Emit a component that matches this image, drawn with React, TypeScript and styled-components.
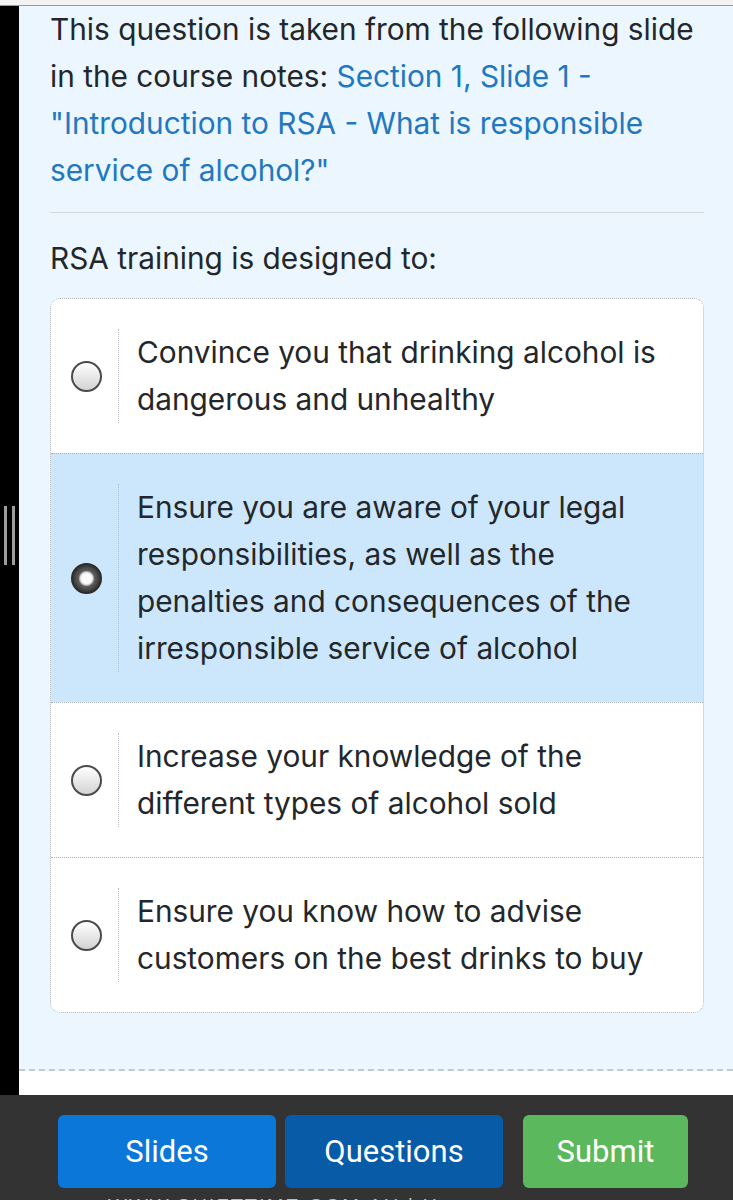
import React from "react";
import styled, { createGlobalStyle } from "styled-components";

const GlobalStyle = createGlobalStyle`
  html, body {
    margin: 0;
    padding: 0;
    background: #ffffff;
  }
  body {
    font-family: "Inter", "Noto Sans", "Liberation Sans", sans-serif;
    -webkit-font-smoothing: antialiased;
  }
`;

const options = [
  "Convince you that drinking alcohol is dangerous and unhealthy",
  "Ensure you are aware of your legal responsibilities, as well as the penalties and consequences of the irresponsible service of alcohol",
  "Increase your knowledge of the different types of alcohol sold",
  "Ensure you know how to advise customers on the best drinks to buy",
];

const Page = styled.div`
  width: 733px;
  height: 1200px;
  overflow: hidden;
  display: flex;
  flex-direction: column;
`;

const TopStrip = styled.div`
  height: 5px;
  background: #f3f3f3;
  border-bottom: 1px solid #9a9a9a;
  flex-shrink: 0;
`;

const Body = styled.div`
  display: flex;
  flex-shrink: 0;
`;

const Rail = styled.div`
  width: 19px;
  background: #000;
  display: flex;
  justify-content: center;
  align-items: flex-start;
  gap: 5px;
  padding-top: 500px;
  box-sizing: border-box;
`;

const Grip = styled.div`
  width: 3px;
  height: 59px;
  background: #9d9d9d;
`;

const Main = styled.div`
  flex: 1;
  display: flex;
  flex-direction: column;
`;

const Panel = styled.div`
  background: #ecf6fe;
  padding: 0 29px 56px 31px;
  border-bottom: 2px dashed #c4c9ce;
`;

const Paragraph = styled.p`
  margin: 0;
  font-size: 29.8px;
  line-height: 47px;
  color: #23272b;
`;

const Link = styled.a`
  color: #2278c0;
  text-decoration: none;
`;

const Rule = styled.hr`
  border: none;
  border-top: 1px solid #d3d8dd;
  margin: 18px 0 22px;
`;

const Prompt = styled(Paragraph)`
  margin-bottom: 16px;
`;

const Card = styled.div`
  background: #fff;
  border: 1px dotted #a9b0b6;
  border-radius: 10px;
  overflow: hidden;
`;

const Option = styled.label<{ $selected?: boolean }>`
  display: flex;
  align-items: center;
  padding: 30px 20px 30px 0;
  background: ${(p) => (p.$selected ? "#cce7fc" : "#fff")};
  & + & {
    border-top: 1px dotted #a9b0b6;
  }
`;

const RadioCell = styled.div`
  width: 67px;
  display: flex;
  justify-content: center;
  align-self: stretch;
  align-items: center;
  border-right: 1px dotted #b8bec3;
  margin-right: 18px;
  flex-shrink: 0;
`;

const Radio = styled.span<{ $checked?: boolean }>`
  width: 31px;
  height: 31px;
  border-radius: 50%;
  box-sizing: border-box;
  border: 2px solid ${(p) => (p.$checked ? "#2c2c2c" : "#4a4a4a")};
  background: ${(p) =>
    p.$checked
      ? "radial-gradient(circle, #fafafa 0 5px, #cfcfcf 6.5px, #5e5e5e 8px, #3a3a3a 13px)"
      : "linear-gradient(#ffffff, #d3d3d3)"};
  margin-left: 3px;
`;

const OptionText = styled.span`
  font-size: 29.8px;
  line-height: 47px;
  color: #23272b;
`;

const Gap = styled.div`
  height: 24px;
  background: #fff;
`;

const Footer = styled.div`
  flex: 1;
  background: #333333;
  padding: 20px 0 0 58px;
  display: flex;
  flex-direction: column;
  gap: 7px;
`;

const Buttons = styled.div`
  display: flex;
`;

const Button = styled.button<{ $bg: string; $w: number; $ml: number }>`
  width: ${(p) => p.$w}px;
  height: 73px;
  margin-left: ${(p) => p.$ml}px;
  background: ${(p) => p.$bg};
  border: none;
  border-radius: 6px;
  color: #fff;
  font-family: "Roboto", "Liberation Sans", sans-serif;
  font-size: 31px;
  padding: 0;
`;

const FooterNote = styled.div`
  font-family: "Liberation Sans", sans-serif;
  font-size: 20px;
  letter-spacing: 2px;
  color: #bdbdbd;
  padding-left: 50px;
`;

export default function App() {
  return (
    <>
      <GlobalStyle />
      <Page>
        <TopStrip />
        <Body>
          <Rail>
            <Grip />
            <Grip />
          </Rail>
          <Main>
            <Panel>
              <Paragraph>
                This question is taken from the following slide in the course
                notes:{" "}
                <Link href="#">
                  Section 1, Slide 1 - "Introduction to RSA - What is
                  responsible service of alcohol?"
                </Link>
              </Paragraph>
              <Rule />
              <Prompt>RSA training is designed to:</Prompt>
              <Card>
                {options.map((text, i) => (
                  <Option key={i} $selected={i === 1}>
                    <RadioCell>
                      <Radio $checked={i === 1} />
                    </RadioCell>
                    <OptionText>{text}</OptionText>
                  </Option>
                ))}
              </Card>
            </Panel>
            <Gap />
          </Main>
        </Body>
        <Footer>
          <Buttons>
            <Button $bg="#0a77d9" $w={218} $ml={0}>
              Slides
            </Button>
            <Button $bg="#075ba7" $w={218} $ml={9}>
              Questions
            </Button>
            <Button $bg="#5cb85c" $w={165} $ml={20}>
              Submit
            </Button>
          </Buttons>
          <FooterNote>WWW.SHIFTTIME.COM.AU | Home</FooterNote>
        </Footer>
      </Page>
    </>
  );
}
